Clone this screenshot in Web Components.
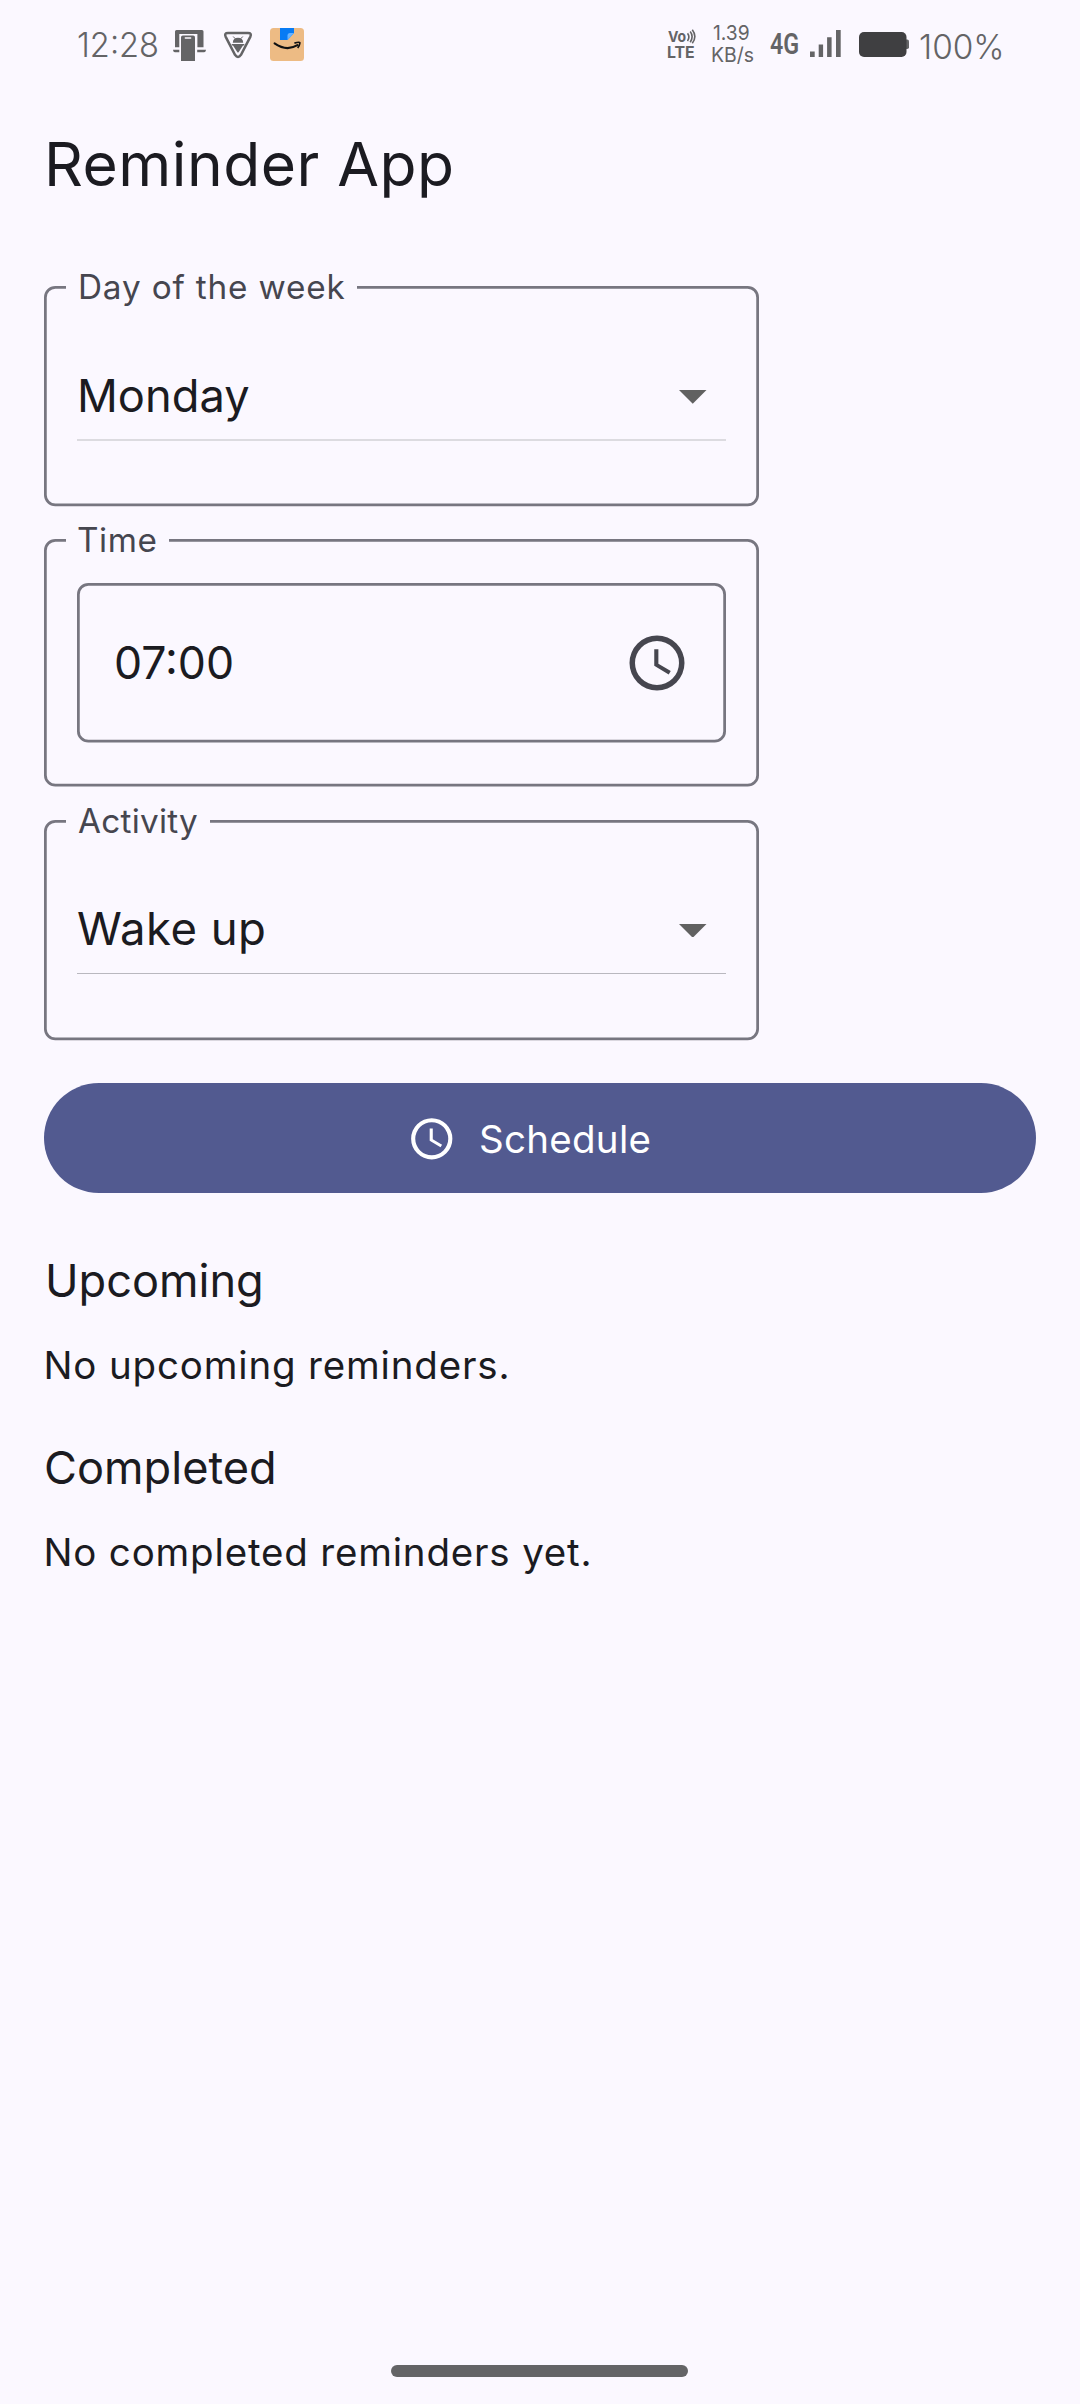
<!DOCTYPE html>
<html lang="en">
<head>
<meta charset="utf-8">
<title>Reminder App</title>
<style>
html,body{margin:0;background:#fbf8ff}
body{font-family:Inter,Roboto,"Liberation Sans",sans-serif;color:#1b1b21}
</style>
</head>
<body>
<reminder-app></reminder-app>
<script>
const define=(name,html,init)=>customElements.define(name,class extends HTMLElement{
  constructor(){super();this.attachShadow({mode:'open'}).innerHTML=html;}
  connectedCallback(){if(init)init.call(this,this.shadowRoot);}
});

/* One line of text whose inked width is `w`; tracking is derived from the font's metrics,
   and a text wider than `w` is condensed instead. */
const pen=document.createElement('canvas').getContext('2d');
define('text-run',`<style>:host{display:block;flex:none;white-space:pre}span{display:block;width:max-content;transform-origin:0 50%}</style><span></span>`,function(root){
  const a=n=>this.getAttribute(n), size=+a('size'), w=+a('w'), weight=a('weight')||370, family=a('family')||'Inter';
  const span=root.querySelector('span'), text=a('text');
  span.textContent=text;
  pen.font=`${weight} ${size}px ${family}`;
  const m=pen.measureText(text);
  const ink=m.actualBoundingBoxLeft+m.actualBoundingBoxRight;
  const squeeze=Math.min(1,w/ink);
  const gap=Math.max(0,(w-ink)/(text.length-1));
  this.style.cssText+=`;width:${w}px;height:${a('lh')}px`;
  span.style.cssText=`font:${weight} ${size}px/${a('lh')}px ${family},sans-serif;letter-spacing:${gap.toFixed(3)}px;margin-left:${m.actualBoundingBoxLeft*squeeze}px`;
  if(squeeze<1) span.style.transform=`scaleX(${squeeze.toFixed(4)})`;
});

define('clock-icon',`<style>:host{display:block;flex:none}svg{display:block;width:100%;height:100%}</style>
<svg viewBox="0 0 24 24" fill="currentColor"><path fill-rule="evenodd" d="M12 2a10 10 0 1 0 0 20a10 10 0 1 0 0-20zM12 4a8 8 0 1 1 0 16a8 8 0 1 1 0-16z"/><path d="M12.5 7H11v6l5.25 3.15.75-1.23-4.5-2.67z"/></svg>`);

define('outline-box',`<style>:host{display:block;position:relative;box-sizing:border-box}
svg{position:absolute;inset:0;width:100%;height:100%;overflow:visible}
rect{x:1.375px;y:1.375px;width:calc(100% - 2.75px);height:calc(100% - 2.75px);rx:10px;fill:none;stroke:#777680;stroke-width:2.75px}
.in{position:relative;height:100%}</style><svg><rect/></svg><div class="in"><slot></slot></div>`);

define('field-set',`<style>:host{display:block;width:715px}
outline-box{height:100%}
.body{display:flex;flex-direction:column;align-items:flex-start;height:100%}
.legend{margin:-19px 0 0 22px;height:40px;background:#fbf8ff;color:#46464f;box-sizing:border-box}
</style><outline-box><div class="body"><div class="legend"></div><slot></slot></div></outline-box>`,function(root){
  const l=root.querySelector('.legend'), a=n=>this.getAttribute(n);
  l.style.width=a('gap')+'px'; l.style.paddingLeft=a('inset')+'px';
  l.innerHTML=`<text-run text="${a('label')}" size="33.3" w="${a('label-w')}" lh="40"></text-run>`;
});

define('select-box',`<style>:host{display:block;width:649px;margin:58.5px 0 0 33px}
.row{display:flex;justify-content:space-between;height:60px;margin-bottom:13.5px}
svg{display:block;margin:24.6px 19.3px 0 0}
.line{background:#dcdbe0;height:2px}
:host([thin]) .line{background:#b9b8bf;height:1px}
</style><div class="row"><slot></slot><svg width="27.5" height="13.75" viewBox="0 0 10 5"><path d="M0 0h10L5 5z" fill="#616161"/></svg></div><div class="line"></div>`);

define('schedule-button',`<style>:host{display:flex;align-items:center;box-sizing:border-box;width:992px;height:110px;border-radius:55px;background:#525a90;color:#fff;padding-left:363px}
clock-icon{width:49.5px;height:49.5px;margin-right:24.5px}
slot{display:block}</style><clock-icon></clock-icon><slot></slot>`);

define('status-bar',`<style>:host{display:flex;align-items:flex-start;height:90px;color:#646466}
svg{display:block;flex:none}.net,.volte{flex:none}</style>
<text-run style="margin:24.5px 0 0 78px" text="12:28" size="33.8" w="79.5" lh="40" weight="330"></text-run>
<svg style="margin:30px 0 0 15.5px" width="33" height="31" viewBox="0 0 33 31" fill="#646466">
 <path d="M2 1.5Q2 0 3.5 0H29Q30.5 0 30.5 1.5V17.3H24.4V4H6.3V17.3H2z"/><path d="M0 19.8H6.3V22.2H1.8Q0 22 0 19.8zM24.2 19.8H33Q33 22 31.2 22.2H24.2z"/>
 <path d="M8 7.3Q8 5.5 9.8 5.5H20.2Q22 5.5 22 7.3V31H8z"/><path d="M12.3 8H17.7" stroke="#fbf8ff" stroke-width="1.3" stroke-linecap="round"/>
</svg>
<svg style="margin:31px 0 0 17px" width="30" height="28" viewBox="0 0 30 28">
 <path d="M5 2H25Q29 2 27.4 5.6L18 23.8Q15 28 12 23.8L2.6 5.6Q1 2 5 2z" fill="none" stroke="#646466" stroke-width="2.5"/>
 <path d="M10.2 5.5l2 2.2M19.8 5.5l-2 2.2" stroke="#646466" stroke-width="1"/>
 <path d="M9.8 11.8Q10 6.9 15 6.8Q20 6.9 20.2 11.8zM8.7 13H21.3V14.4H20L15.6 21.2Q15 22 14.4 21.2L10 14.4H8.7z" fill="#646466"/>
</svg>
<svg style="margin:28px 0 0 17px" width="34" height="33" viewBox="0 0 34 33">
 <rect width="34" height="33" rx="3.5" fill="#edbb84"/><path d="M10 0H24V5L17.5 12H10z" fill="#087bf4"/><path d="M17.5 12V7.5Q17.5 5 20 5H24z" fill="#68b3ff"/>
 <path d="M4.6 15.4Q16.5 23.8 27.4 17.2" fill="none" stroke="#111" stroke-width="2.1" stroke-linecap="round"/><path d="M24.4 15.1Q30.6 13.3 29.8 15.3Q29.5 17.8 27.7 20" fill="none" stroke="#111" stroke-width="1.7"/>
</svg>
<div class="volte" style="margin:29px 0 0 364px">
 <div style="display:flex"><text-run text="Vo" size="15" w="18" lh="16" weight="700"></text-run>
 <svg style="margin:0 0 0 .5px" width="9" height="15" viewBox="0 0 9 15" fill="none" stroke="#646466" stroke-width="1.6"><path d="M.5 4.3Q3.3 8 .5 12M3.2 2.6Q7 7.5 3.2 13.3M5.3 .8Q10.4 7.5 5.3 14.3"/></svg></div>
 <text-run style="margin-top:-1.5px" text="LTE" size="16" w="26" lh="16" weight="700"></text-run>
</div>
<div class="net" style="margin:23px 0 0 15.5px;width:44px">
 <text-run style="margin-left:2px" text="1.39" size="20.5" w="36" lh="20" weight="400"></text-run>
 <text-run style="margin:1.5px 0 0 .5px" text="KB/s" size="20" w="41.5" lh="20" weight="400"></text-run>
</div>
<text-run style="margin:23.5px 0 0 15px" text="4G" size="29" w="28.5" lh="40" weight="600" family="Roboto"></text-run>
<svg style="margin:30px 0 0 11.5px" width="31" height="27" viewBox="0 0 31 27" fill="#646466"><path d="M0 21.5h4.7V27H0zM8.7 14.5h4.4V27H8.7zM17.1 7.2h4.5V27h-4.5zM26 0h4.7v27H26z"/></svg>
<svg style="margin:32px 0 0 17.5px" width="50" height="25" viewBox="0 0 50 25"><path d="M47 7.5h1.2q1.8 0 1.8 1.8v6q0 1.7-1.8 1.7H47z" fill="#646466"/><rect width="47.5" height="25" rx="5" fill="#3f3f41"/></svg>
<text-run style="margin:26.5px 0 0 11.5px" text="100%" size="33.8" w="82" lh="40" weight="330"></text-run>`);

define('reminder-app',`<style>:host{display:flex;flex-direction:column;align-items:flex-start;width:1080px;height:2404px;overflow:hidden;background:#fbf8ff}
status-bar{width:100%}
field-set,schedule-button{margin-left:44px;flex:none}
field-set{height:220.3px}
.fields{display:flex;flex-direction:column;gap:32.9px;margin:82px 0 43.5px}
.fields field-set{margin-left:44px}
.time{width:649px;height:159.5px;margin:23px 0 0 33px}
.time div{display:flex;align-items:center;justify-content:space-between;height:160px;padding:0 35.7px 0 38.5px}
.time clock-icon{width:66px;height:66px;color:#46464f}
nav{width:297px;height:11.5px;border-radius:6px;background:#646466;margin:auto 0 27.3px 391px;flex:none}
</style>
<status-bar></status-bar>
<text-run style="margin:34px 0 0 49px" text="Reminder App" size="60.5" w="402" lh="80" weight="400"></text-run>
<div class="fields">
 <field-set label="Day of the week" label-w="264.5" gap="291" inset="14">
  <select-box><text-run style="margin-left:3px" text="Monday" size="45.5" w="169" lh="60"></text-run></select-box>
 </field-set>
 <field-set style="height:247.5px" label="Time" label-w="77.5" gap="102.5" inset="12">
  <outline-box class="time"><div><text-run text="07:00" size="45.5" w="115.5" lh="60"></text-run><clock-icon></clock-icon></div></outline-box>
 </field-set>
 <field-set label="Activity" label-w="119" gap="144" inset="12">
  <select-box thin><text-run style="margin-left:1px" text="Wake up" size="45.5" w="186" lh="60"></text-run></select-box>
 </field-set>
</div>
<schedule-button><text-run style="margin-top:2px" text="Schedule" size="38.5" w="168.5" lh="50"></text-run></schedule-button>
<text-run style="margin:58px 0 0 47.5px" text="Upcoming" size="45.3" w="213" lh="60"></text-run>
<text-run style="margin:29px 0 0 46.5px" text="No upcoming reminders." size="38.5" w="461" lh="50"></text-run>
<text-run style="margin:48px 0 0 46px" text="Completed" size="45.3" w="228" lh="60"></text-run>
<text-run style="margin:29px 0 0 46.5px" text="No completed reminders yet." size="38.5" w="543" lh="50"></text-run>
<nav></nav>`);
</script>
</body>
</html>
